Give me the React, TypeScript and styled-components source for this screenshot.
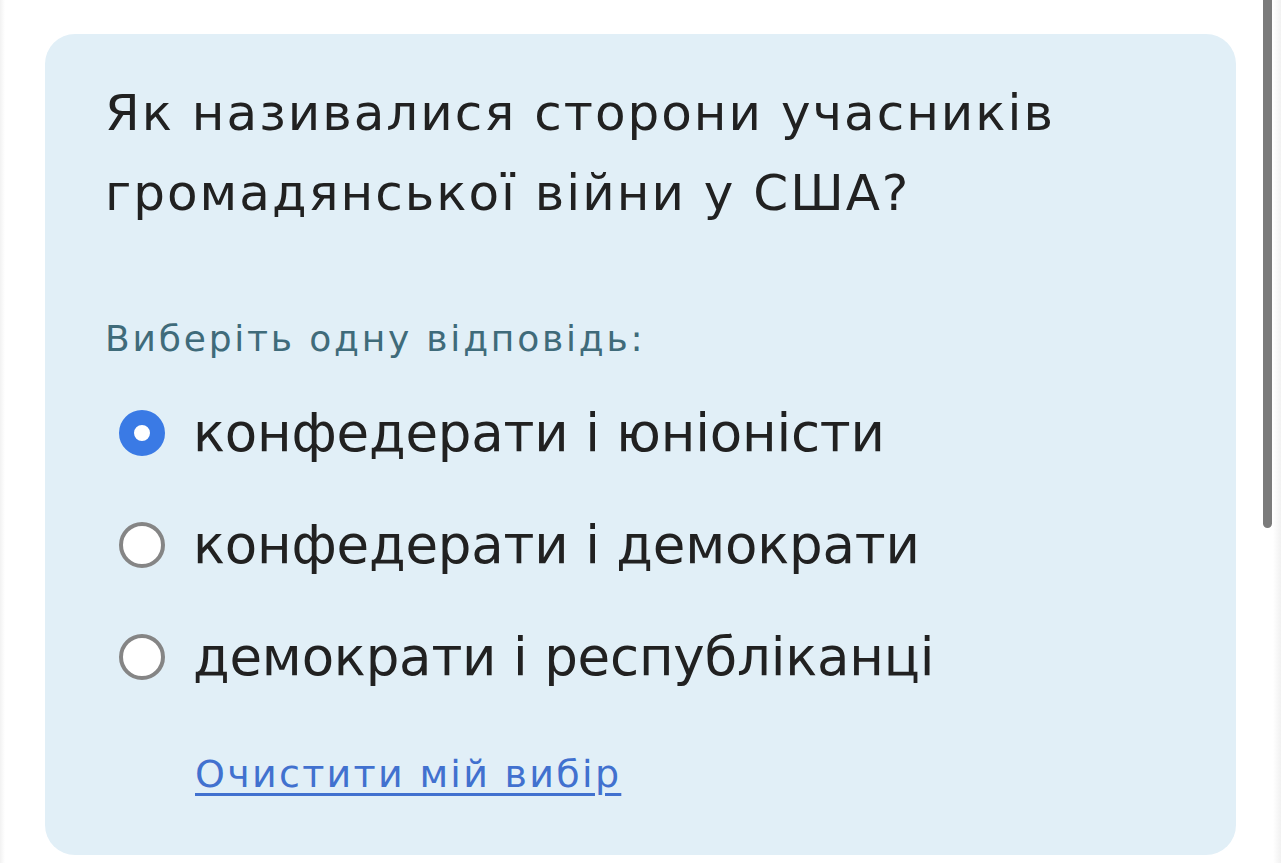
import React, { useState } from "react";
import styled, { createGlobalStyle } from "styled-components";

const Global = createGlobalStyle`
  html, body { margin: 0; padding: 0; background: #ffffff; }
  body { font-family: "DejaVu Sans", "Open Sans", sans-serif; overflow: hidden; }
`;

const Page = styled.div`
  position: relative;
  width: 1281px;
  height: 863px;
  box-sizing: border-box;
  padding: 34px 45px 0 45px;
  background: linear-gradient(to right, #f2f2f2 0, #ffffff 5px, #ffffff calc(100% - 8px), #f1f1f1 100%);
`;

const Card = styled.div`
  width: 1191px;
  height: 821px;
  box-sizing: border-box;
  background: #e1eff7;
  border-radius: 30px;
  padding: 39px 61px 0 60px;
  display: flex;
  flex-direction: column;
`;

const Title = styled.h1`
  margin: 0;
  font-weight: 400;
  font-size: 50px;
  line-height: 80px;
  letter-spacing: 2px;
  color: #212121;
  max-width: 1020px;
`;

const Prompt = styled.div`
  margin-top: 81px;
  font-size: 36px;
  line-height: 50px;
  letter-spacing: 2.8px;
  color: #3f6b7a;
`;

const Options = styled.div`
  display: flex;
  flex-direction: column;
  margin-top: 41px;
  gap: 56px;
`;

const Option = styled.label`
  display: flex;
  align-items: center;
  gap: 28px;
  padding-left: 14px;
  font-size: 53px;
  line-height: 56px;
  letter-spacing: -0.2px;
  color: #212121;
  cursor: pointer;
`;

const Radio = styled.span<{ $checked: boolean }>`
  flex: none;
  width: 46px;
  height: 46px;
  box-sizing: border-box;
  border-radius: 50%;
  background: #ffffff;
  border: ${(p) => (p.$checked ? "15px solid #3a7ae5" : "4px solid #858585")};
`;

const Clear = styled.a`
  margin-top: 64px;
  margin-left: 90px;
  font-size: 38px;
  line-height: 50px;
  letter-spacing: 2.3px;
  color: #4171cf;
  text-decoration: underline;
  text-decoration-thickness: 3px;
  text-underline-offset: 6px;
  align-self: flex-start;
  cursor: pointer;
`;

const Scrollbar = styled.div`
  position: absolute;
  top: 0;
  right: 9px;
  width: 9px;
  height: 528px;
  border-radius: 0 0 5px 5px;
  background: #7b7b7b;
`;

const options = [
  "конфедерати і юніоністи",
  "конфедерати і демократи",
  "демократи і республіканці",
];

export default function App() {
  const [sel, setSel] = useState(0);
  return (
    <>
      <Global />
      <Page>
        <Card>
          <Title>Як називалися сторони учасників громадянської війни у США?</Title>
          <Prompt>Виберіть одну відповідь:</Prompt>
          <Options>
            {options.map((o, i) => (
              <Option key={o} onClick={() => setSel(i)}>
                <Radio $checked={sel === i} />
                {o}
              </Option>
            ))}
          </Options>
          <Clear onClick={() => setSel(-1)}>Очистити мій вибір</Clear>
        </Card>
        <Scrollbar />
      </Page>
    </>
  );
}
